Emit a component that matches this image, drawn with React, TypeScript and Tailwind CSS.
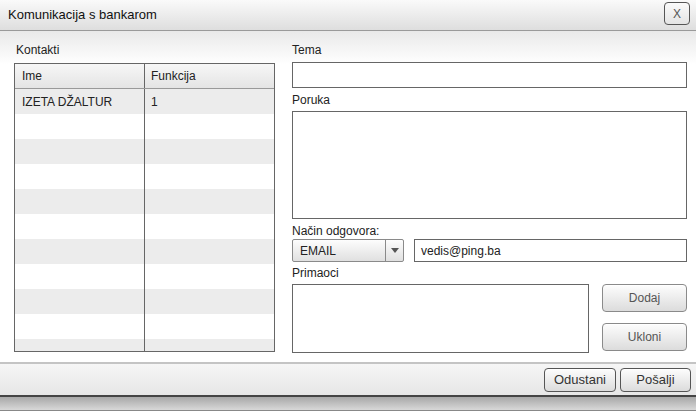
const rows = Array.from({ length: 11 });

function GrayButton({ label, className = "" }: { label: string; className?: string }) {
  return (
    <button
      className={`rounded-[4px] border border-[#8a8a8a] bg-gradient-to-b from-[#fdfdfd] to-[#dcdcdc] text-[12px] text-[#333] shadow-[inset_0_1px_0_#fff] ${className}`}
    >
      {label}
    </button>
  );
}

export default function App() {
  return (
    <div className="flex h-[411px] w-[696px] flex-col bg-white font-['Liberation_Sans',Arial,sans-serif] text-[12px] text-[#222]">
      {/* title bar */}
      <div className="flex h-[31px] shrink-0 items-center justify-between border-b border-[#9a9a9a] bg-gradient-to-b from-[#fafafa] to-[#dedede] pl-[8px] pr-[6px]">
        <span className="text-[13px] text-[#111]">Komunikacija s bankarom</span>
        <button className="mb-[3px] flex h-[23px] w-[26px] items-center justify-center rounded-[4px] border border-[#555] bg-gradient-to-b from-[#fafafa] to-[#e4e4e4] text-[12px] text-[#555]">
          X
        </button>
      </div>

      {/* body */}
      <div className="flex h-[331px] shrink-0 gap-[17px] bg-gradient-to-b from-[#e9e9e9] via-white via-[10%] to-white pl-[14px] pr-[9px] pt-[11px]">
        <div className="flex w-[261px] flex-col">
          <div className="mb-[5px] pl-[2px] leading-[16px]">Kontakti</div>
          <div className="h-[289px] overflow-hidden border border-[#666] bg-white">
            <div className="flex h-[25px] border-b border-[#999] bg-gradient-to-b from-[#f7f7f7] to-[#e4e4e4]">
              <div className="flex w-[130px] items-center border-r border-[#666] pl-[7px]">Ime</div>
              <div className="flex flex-1 items-center pl-[6px]">Funkcija</div>
            </div>
            {rows.map((_, i) => (
              <div key={i} className={`flex h-[25px] ${i % 2 === 0 ? "bg-[#ececec]" : "bg-white"}`}>
                <div className="flex w-[130px] items-center border-r border-[#666] pl-[7px]">
                  {i === 0 ? "IZETA DŽALTUR" : ""}
                </div>
                <div className="flex flex-1 items-center pl-[6px]">{i === 0 ? "1" : ""}</div>
              </div>
            ))}
          </div>
        </div>

        <div className="flex flex-1 flex-col">
          <div className="mb-[4px] leading-[16px]">Tema</div>
          <input className="block h-[26px] w-full border border-[#666] bg-white outline-none" />
          <div className="mb-[3px] mt-[4px] leading-[16px]">Poruka</div>
          <textarea className="block h-[108px] w-full resize-none border border-[#666] bg-white outline-none" />
          <div className="mt-[4px] leading-[16px]">Način odgovora:</div>
          <div className="flex h-[23px] gap-[10px]">
            <div className="flex w-[112px] rounded-[2px] border border-[#8a8a8a] bg-gradient-to-b from-[#fdfdfd] to-[#e0e0e0]">
              <div className="flex flex-1 items-center pl-[7px]">EMAIL</div>
              <div className="flex w-[18px] items-center justify-center border-l border-[#8a8a8a]">
                <svg width="8" height="5" viewBox="0 0 8 5">
                  <path d="M0 0h8L4 5z" fill="#555" />
                </svg>
              </div>
            </div>
            <div className="flex flex-1 items-center border border-[#666] bg-white pl-[6px]">vedis@ping.ba</div>
          </div>
          <div className="mb-[3px] mt-[3px] leading-[16px]">Primaoci</div>
          <div className="flex gap-[13px]">
            <div className="h-[69px] w-[297px] border border-[#666] bg-white" />
            <div className="flex flex-1 flex-col gap-[11px]">
              <GrayButton label="Dodaj" className="h-[28px] w-full text-[#555]" />
              <GrayButton label="Ukloni" className="h-[28px] w-full text-[#555]" />
            </div>
          </div>
        </div>
      </div>

      {/* footer */}
      <div className="flex h-[35px] shrink-0 items-center justify-end gap-[4px] border-b-2 border-t-2 border-b-[#444] border-t-[#c4c4c4] bg-gradient-to-b from-[#f6f6f6] to-[#e6e6e6] pr-[5px]">
        <GrayButton label="Odustani" className="h-[24px] w-[72px] border-[#555] text-[13px]" />
        <GrayButton label="Pošalji" className="h-[24px] w-[71px] border-[#555] text-[13px]" />
      </div>
      <div className="flex-1 border-b border-[#888] bg-gradient-to-b from-[#a8a8a8] to-[#d8d8d8]" />
    </div>
  );
}
